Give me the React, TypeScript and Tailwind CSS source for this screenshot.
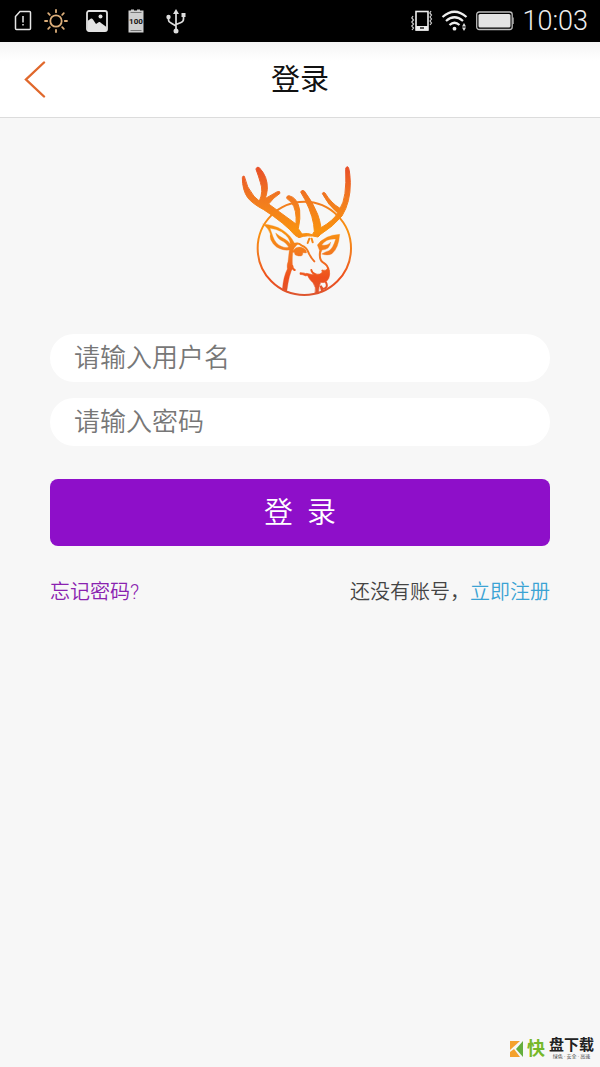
import React from "react";

function SimAlertIcon() {
  return (
    <svg width="18" height="22" viewBox="0 0 18 22" fill="none" stroke="#e6e6e6" strokeWidth="1.5" aria-hidden="true">
      <path d="M6 1.5H15.5Q16.5 1.5 16.5 2.5V18.500Q16.500 19.500 15.500 19.500H2.500Q1.500 19.500 1.500 18.500V6.500Z" />
      <path d="M9 6v6.500M9 14v1.500" />
    </svg>
  );
}

function BrightnessIcon() {
  return (
    <svg width="24" height="24" viewBox="0 0 24 24" fill="none" stroke="#dcae7a" strokeWidth="1.8" strokeLinecap="round" aria-hidden="true">
      <circle cx="12" cy="12" r="5.700" />
      <path d="M12 1v2.200M12 20.800V23M1 12h2.200M20.800 12H23M4.200 4.200l1.600 1.600M18.200 18.200l1.600 1.600M4.200 19.800l1.600-1.600M18.200 5.800l1.600-1.600" />
    </svg>
  );
}

function PictureIcon() {
  return (
    <svg width="22" height="22" viewBox="0 0 22 22" fill="none" aria-hidden="true">
      <rect x="1" y="1" width="20" height="20" rx="2" stroke="#e2e2e2" strokeWidth="1.800" />
      <path d="M1.500 11L5 8.500Q6 8 7 9.500L10 14L13 12Q14 11.500 15 13L20.500 17V20.500H1.500Z" fill="#e2e2e2" />
      <circle cx="14.500" cy="6.500" r="2" fill="#e2e2e2" />
    </svg>
  );
}

function FullBatteryIcon() {
  return (
    <svg width="16" height="24" viewBox="0 0 16 24" aria-hidden="true">
      <path d="M0.500 1.500H3V0.500H6V1.500H9V0.500H12V1.500H15.500V23.500H0.500Z" fill="#cfcfcf" />
      <path d="M2.500 3.500H13.500M2.500 21.500H13.500" stroke="#777" />
      <text x="8" y="15" textAnchor="middle" fontSize="8" fontWeight="700" fontFamily="Roboto, sans-serif" fill="#111">100</text>
    </svg>
  );
}

function UsbIcon() {
  return (
    <svg width="20" height="25" viewBox="0 0 20 25" fill="#dedede" aria-hidden="true">
      <path d="M10 4V21M2.500 8V11Q2.500 13 5 14L10 17M17.500 7V10Q17.500 12.500 15 13.500L10 15.500" stroke="#dedede" strokeWidth="1.700" fill="none" />
      <path d="M10 0L13 5H7Z" />
      <circle cx="2.500" cy="8" r="2.200" />
      <rect x="15.500" y="4" width="4" height="4" />
      <circle cx="10" cy="22" r="2.500" />
    </svg>
  );
}

function VibrateIcon() {
  return (
    <svg width="22" height="22" viewBox="0 0 22 22" fill="none" aria-hidden="true">
      <rect x="5" y="1.500" width="12" height="18.500" stroke="#eee" strokeWidth="1.600" />
      <path d="M5 16H17V20.500H5Z" fill="#eee" />
      <path d="M9 18H13" stroke="#222" strokeWidth="1.500" />
      <path d="M2 6L0.800 8L2.500 10L0.800 12L2.500 14L0.800 16L2.500 18L1 20M20 1L18.800 3L20.500 5L19 7L20.500 9L19 11L20.500 13L19 15" stroke="#ccc" strokeWidth="1.200" />
    </svg>
  );
}

function WifiIcon() {
  return (
    <svg width="27" height="22" viewBox="0 0 27 22" fill="none" stroke="#eee" strokeWidth="2.200" aria-hidden="true">
      <path d="M1.500 7Q13.500-3.500 25.500 7M5 11Q13.500 3.500 22 11M8.500 15Q13.500 10.500 18.500 15" />
      <circle cx="13.500" cy="18.700" r="1.900" fill="#eee" stroke="none" />
      <path d="M23 13L25 16.500H21ZM23 21L21 17.500H25Z" fill="#ddd" stroke="none" />
    </svg>
  );
}

function BatteryIcon() {
  return (
    <svg width="38" height="20" viewBox="0 0 38 20" fill="none" aria-hidden="true">
      <rect x="0.700" y="1" width="35.500" height="17.500" rx="2.500" stroke="#bbb" strokeWidth="1.300" />
      <rect x="2.500" y="3" width="32" height="13.500" rx="1.500" fill="#e4e4e4" />
      <path d="M37 6.500V13" stroke="#aaa" strokeWidth="1.500" />
    </svg>
  );
}

function DeerLogo() {
  return (
    <svg width="140" height="150" viewBox="0 0 420 450" role="img" aria-label="鹿">
      <defs>
        <linearGradient id="deer" gradientUnits="userSpaceOnUse" x1="0" y1="35" x2="0" y2="422">
          <stop offset="0" stopColor="#e84e28" />
          <stop offset="0.250" stopColor="#f17a20" />
          <stop offset="0.500" stopColor="#f9920f" />
          <stop offset="0.700" stopColor="#f17523" />
          <stop offset="0.860" stopColor="#ee4f1c" />
          <stop offset="1" stopColor="#dd5630" />
        </linearGradient>
      </defs>
      <circle cx="223" cy="280" r="140" fill="none" stroke="url(#deer)" strokeWidth="6" />
      <path d="M182 262L235 232L285 262L303 350L265 408H172Z" fill="#f7f7f7" />
      <path d="M103 208Q137 214 158 226Q188 242 200 280Q175 292 150 279Q127 267 124 239Z" fill="#f7f7f7" />
      <path d="M268 262Q290 238 328 241Q325 278 304 294Q285 306 270 292Z" fill="#f7f7f7" />
      <g fill="url(#deer)" stroke="url(#deer)" strokeWidth="2" strokeLinejoin="round">
        <path d="M37 68Q38 61 43 64Q49 97 72 124L88 138Q101 109 91 82Q86 64 78 43Q79 34 88 38Q114 65 112 103Q110 122 105 131L142 110Q151 107 150 115Q130 128 116 147L198 207Q201 164 184 142L170 130Q169 122 177 122Q203 128 209 165Q212 190 205 221L216 237Q232 233 247 239L253 229Q252 188 225 134L212 111Q215 103 223 108Q249 142 263 178Q270 196 273 218Q310 197 323 174Q295 151 277 116Q279 109 285 114Q304 145 330 160Q351 130 347 43Q346 36 353 35Q359 37 361 82Q362 141 336 183Q310 214 272 238L264 246Q231 238 207 248L195 241Q165 205 101 164Q67 146 53 128Q37 105 37 68Z" strokeWidth="3" />
        <path d="M98 207Q134 210 156 224Q181 239 193 264L205 265L196 275Q186 282 187 324L188 340Q178 354 170 411L157 404Q160 365 172 342Q170 329 174 320L178 285Q148 288 130 267Q117 252 121 237Q116 220 98 207ZM120 220L129 245Q136 266 154 274Q166 280 176 276Q168 262 155 257Q142 252 137 234Q148 244 164 252Q177 259 181 267Q180 247 154 230Q139 222 120 220Z" fillRule="evenodd" strokeWidth="1" />
        <path d="M262 270Q284 240 329 238Q326 280 306 296Q294 303 275 297Q288 289 297 287Q309 280 317 252Q288 250 275 270Q294 273 302 261Q300 284 276 285L270 300Q270 285 262 270Z" strokeWidth="1" />
        <path d="M190 286Q202 270 221 280Q232 286 229 294L218 293Q221 305 205 303Q191 300 194 293L187 291Z" strokeWidth="1" />
        <path d="M210 353Q222 352 234 359L228 363Q218 358 210 358ZM229 355Q246 361 256 356Q271 361 277 351Q272 342 281 346Q288 347 292 341Q300 344 299 357Q298 373 289 379Q286 384 272 382Q266 394 265 416H255Q260 397 249 383Q239 376 229 355Z" />
      </g>
      <g fill="none" stroke="url(#deer)" strokeWidth="6" strokeLinecap="round">
        <path d="M188 270Q203 261 214 271Q231 277 237 296Q243 309 253 319M187 333Q187 342 194 345M270 291Q267 315 279 322Q294 330 296 347M244 345Q245 353 254 357M238 251L233 264M245 251L248 262M288 382Q296 399 278 402L272 392L276 408" />
      </g>
    </svg>
  );
}

function WatermarkLogo() {
  return (
    <svg width="13" height="18" viewBox="0 0 13 18" aria-hidden="true">
      <path d="M0 1H10L0 10Z" fill="#f4a12d" />
      <path d="M13 1V17L6 9Z" fill="#64ae3e" />
      <path d="M0 12L4 9L10 17H0Z" fill="#f4a12d" />
    </svg>
  );
}

const fieldClass =
  "h-12 w-full rounded-full bg-white px-6 text-[26px] leading-8 font-[350] text-[#555] outline-none placeholder:text-[#777] placeholder:opacity-100";

export default function App() {
  return (
    <div className="relative flex min-h-screen flex-col bg-[#f7f7f7] font-['Roboto','Noto_Sans_CJK_SC',sans-serif]">
      <div className="flex h-[42px] items-center justify-between bg-black pr-3 pl-3.5">
        <div className="flex items-center">
          <SimAlertIcon />
          <span className="ml-3"><BrightnessIcon /></span>
          <span className="ml-[18px]"><PictureIcon /></span>
          <span className="ml-5"><FullBatteryIcon /></span>
          <span className="ml-[22px]"><UsbIcon /></span>
        </div>
        <div className="flex items-center gap-2">
          <VibrateIcon />
          <WifiIcon />
          <BatteryIcon />
          <span className="text-[27px] leading-8 font-[350] text-[#eee]">10:03</span>
        </div>
      </div>

      <header className="grid h-[76px] grid-cols-[1fr_auto_1fr] items-center border-b border-[#dcdcdc] bg-linear-to-b from-[#f4f4f4] to-white to-25% px-6">
        <button type="button" aria-label="返回" className="justify-self-start">
          <svg width="22" height="38" viewBox="0 0 22 38" fill="none" stroke="#e0682c" strokeWidth="2.400" strokeLinecap="round" aria-hidden="true">
            <path d="M20 1.500L2 18.500L20 35.500" />
          </svg>
        </button>
        <h1 className="text-[29px] leading-9 text-[#111]">登录</h1>
      </header>

      <main className="flex flex-col px-[50px] pt-[37px]">
        <div className="flex justify-center">
          <DeerLogo />
        </div>
        <form className="mt-[29px] flex flex-col" onSubmit={(e) => e.preventDefault()}>
          <div className="flex flex-col gap-4">
            <input type="text" aria-label="用户名" placeholder="请输入用户名" className={fieldClass} />
            <input type="password" aria-label="密码" placeholder="请输入密码" className={fieldClass} />
          </div>
          <button type="submit" className="mt-[33px] h-[67px] rounded-lg bg-[#8e0fc9] text-[29px] leading-9 font-[350] whitespace-pre text-white">
            登  录
          </button>
        </form>
        <div className="mt-[31px] flex items-center justify-between text-[20px] leading-[30px] font-[350]">
          <a href="#forgot" className="text-[#8a22b0]">忘记密码?</a>
          <p className="text-[#444]">
            还没有账号，<a href="#register" className="text-[#3ba3d4]">立即注册</a>
          </p>
        </div>
      </main>

      <div className="absolute right-1.5 bottom-2 flex items-center gap-1">
        <WatermarkLogo />
        <span className="text-[18px] leading-5 font-bold text-[#76b82a]">快</span>
        <div className="flex flex-col items-center">
          <span className="text-[15px] leading-[15px] font-bold text-[#222]">盘下载</span>
          <span className="text-[5px] leading-[6px] text-[#444]">绿色 · 安全 · 高速</span>
        </div>
      </div>
    </div>
  );
}
